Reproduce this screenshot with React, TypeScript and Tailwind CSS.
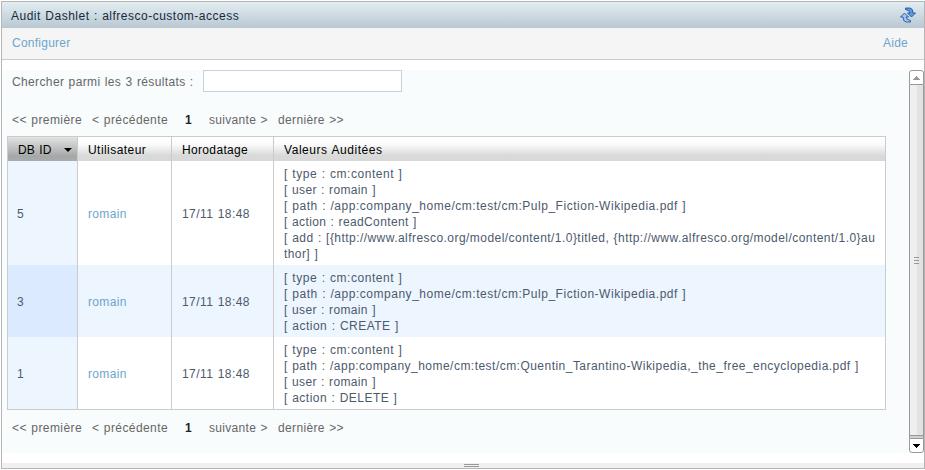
import React from "react";

const rows = [
  {
    id: "5",
    values: [
      ["[ type : cm:content ]", "tracking-[0.54px]"],
      ["[ user : romain ]", "tracking-[0.36px]"],
      ["[ path : /app:company_home/cm:test/cm:Pulp_Fiction-Wikipedia.pdf ]", "tracking-[0.52px]"],
      ["[ action : readContent ]", "tracking-[0.37px]"],
      [
        "[ add : [{http://www.alfresco.org/model/content/1.0}titled, {http://www.alfresco.org/model/content/1.0}au",
        "tracking-[0.45px]",
      ],
      ["thor] ]", "tracking-[0.42px]"],
    ],
  },
  {
    id: "3",
    values: [
      ["[ type : cm:content ]", "tracking-[0.54px]"],
      ["[ path : /app:company_home/cm:test/cm:Pulp_Fiction-Wikipedia.pdf ]", "tracking-[0.52px]"],
      ["[ user : romain ]", "tracking-[0.36px]"],
      ["[ action : CREATE ]", "tracking-[0.49px]"],
    ],
  },
  {
    id: "1",
    values: [
      ["[ type : cm:content ]", "tracking-[0.54px]"],
      [
        "[ path : /app:company_home/cm:test/cm:Quentin_Tarantino-Wikipedia,_the_free_encyclopedia.pdf ]",
        "tracking-[0.47px]",
      ],
      ["[ user : romain ]", "tracking-[0.36px]"],
      ["[ action : DELETE ]", "tracking-[0.47px]"],
    ],
  },
];

const headers = ["DB ID", "Utilisateur", "Horodatage", "Valeurs Auditées"];

function Pager() {
  return (
    <div className="flex h-4 pl-[10px] leading-4 text-[#666]">
      <span className="w-[80px] tracking-[0.44px]">&lt;&lt; première</span>
      <span className="w-[93px] tracking-[0.42px]">&lt; précédente</span>
      <span className="w-[24px] font-bold text-[#222]">1</span>
      <span className="w-[69px] tracking-[0.32px]">suivante &gt;</span>
      <span className="tracking-[0.36px]">dernière &gt;&gt;</span>
    </div>
  );
}

function RefreshIcon() {
  return (
    <svg width="16" height="16" viewBox="0 0 16 16">
      <path d="M5.500 1H10q3 .5 3 5h2.500l-4 4L7.500 6H10q-.5-2.800-4.500-3.500z" fill="#5f98d8" stroke="#1f55a0" strokeWidth="0.9" strokeLinejoin="round" />
      <path d="M10.500 15H6q-3-.5-3-5H.500l4-4 4 4H6q.5 2.800 4.500 3.500z" fill="#9cc6f0" stroke="#1f55a0" strokeWidth="0.9" strokeLinejoin="round" />
    </svg>
  );
}

function Scrollbar() {
  return (
    <div className="flex h-full w-[15px] flex-col">
      <div className="flex h-[15px] items-center justify-center rounded-t-[3px] border border-[#999] bg-white">
        <svg width="7" height="4" viewBox="0 0 7 4" shapeRendering="crispEdges">
          <path d="M3 0h1v1h1v1h1v1h1v1H0V3h1V2h1V1h1z" fill="#999" />
        </svg>
      </div>
      <div className="flex flex-1 items-center justify-center border-x border-[#999] bg-[linear-gradient(to_right,#efefef_0_7px,#e2e2e2_7px)]">
        <div className="flex w-[5px] flex-col gap-[2px]">
          <i className="h-px bg-[#999]" />
          <i className="h-px bg-[#999]" />
          <i className="h-px bg-[#999]" />
        </div>
      </div>
      <div className="h-[3px] border border-b-0 border-[#999] bg-[#d0d0d0]" />
      <div className="flex h-[15px] items-center justify-center rounded-b-[3px] border border-[#999] bg-white">
        <svg width="7" height="4" viewBox="0 0 7 4" shapeRendering="crispEdges">
          <path d="M0 0h7v1H6v1H5v1H4v1H3V3H2V2H1V1H0z" fill="#000" />
        </svg>
      </div>
    </div>
  );
}

export default function App() {
  return (
    <div className="h-[470px] w-[925px] overflow-hidden bg-white pt-px pl-px font-['Liberation_Sans',Arial,sans-serif] text-[12px] tracking-[0.34px] whitespace-nowrap [word-spacing:0.6px]">
      <div className="flex h-[468px] w-[924px] flex-col border border-[#b5b5b5]">
        <div className="flex h-[26px] items-center justify-between bg-linear-to-b from-[#e3eef2] to-[#b8c7d3] pr-2 pl-[9px] tracking-[0.5px] text-[#172a3a]">
          <span className="pt-[2px]">Audit Dashlet : alfresco-custom-access</span>
          <RefreshIcon />
        </div>
        <div className="flex h-8 items-center justify-between border-b border-[#ccc] bg-[#f5f5f5] pr-4 pb-[2px] pl-[10px] tracking-[0.25px] text-[#6ca5ce]">
          <span>Configurer</span>
          <span>Aide</span>
        </div>
        <div className="mt-[10px] flex h-[383px] justify-between bg-[#f8fcfd]">
          <div className="flex flex-col">
            <div className="flex h-[22px] items-center pl-[10px] text-[#666]">
              <span className="w-[191px] pt-[2px] tracking-[0.37px]">Chercher parmi les 3 résultats :</span>
              <input className="h-[22px] w-[199px] border border-[#c5d3e0] bg-white outline-none" />
            </div>
            <div className="mt-5 mb-2">
              <Pager />
            </div>
            <div className="ml-[5px] grid w-[879px] grid-cols-[70px_94px_102px_611px] border border-[#cbcbcb] bg-white">
              {headers.map((h, i) => (
                <div
                  key={h}
                  className={
                    "flex h-6 items-center justify-between pt-px pr-[5px] pl-[10px] text-black " +
                    (i === 0
                      ? "bg-[linear-gradient(#e2e4e3,#a5a8a8_80%,#ababab)] "
                      : "bg-[linear-gradient(#fff_0%,#fafbfa_30%,#d8dad9_78%,#d8d8d8)] ") +
                    (i === 0 ? "tracking-[0.2px] " : i === 3 ? "tracking-[0.55px] " : i === 2 ? "tracking-[0.34px] " : "tracking-[0.44px] ") +
                    (i < 3 ? "border-r border-[#cbcbcb]" : "")
                  }
                >
                  <span>{h}</span>
                  {i === 0 && (
                    <svg width="8" height="4" viewBox="0 0 8 4">
                      <path d="M0 0h8L4 4z" fill="#000" />
                    </svg>
                  )}
                </div>
              ))}
              {rows.map((r, i) => (
                <React.Fragment key={r.id}>
                  <div className={"flex items-center border-r border-[#cbcbcb] pt-[2px] pl-[9px] text-[#4c5a6c] " + (i === 1 ? "bg-[#dbeaff]" : "bg-[#edf5ff]")}>{r.id}</div>
                  <div className={"flex items-center border-r border-[#cbcbcb] pt-[2px] pl-[10px] text-[#6ca5ce] " + (i === 1 ? "bg-[#edf5ff]" : "")}>romain</div>
                  <div className={"flex items-center border-r border-[#cbcbcb] pt-[2px] pl-[10px] tracking-[0.44px] text-[#4c5a6c] " + (i === 1 ? "bg-[#edf5ff]" : "")}>17/11 18:48</div>
                  <div className={"pt-[5px] pb-[3px] pl-[10px] leading-4 text-[#4c5a6c] " + (i === 1 ? "bg-[#edf5ff]" : "")}>
                    {r.values.map(([text, spacing]) => (
                      <div key={text} className={spacing}>{text}</div>
                    ))}
                  </div>
                </React.Fragment>
              ))}
            </div>
            <div className="mt-[10px]">
              <Pager />
            </div>
          </div>
          <Scrollbar />
        </div>
        <div className="mt-[10px] flex h-[5px] items-center justify-center bg-[#f0f0f0] pl-4">
          <div className="h-[3px] w-[15px] border-y border-[#999]" />
        </div>
      </div>
    </div>
  );
}
